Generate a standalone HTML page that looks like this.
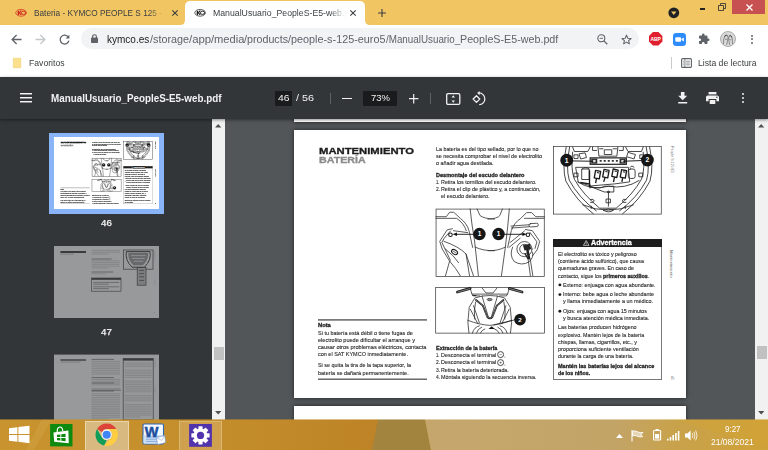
<!DOCTYPE html>
<html><head><meta charset="utf-8"><title>ManualUsuario_PeopleS-E5-web.pdf</title>
<style>
*{box-sizing:border-box;margin:0;padding:0}
html,body{width:768px;height:450px;overflow:hidden;background:#fff;font-family:"Liberation Sans",sans-serif;}
.abs{position:absolute}
.t{position:absolute;white-space:nowrap;transform-origin:0 50%;display:block}
svg{position:absolute;overflow:visible}
#tabstrip{left:0;top:0;width:768px;height:25px;background:#f0c562}
#tab2{left:185px;top:1px;width:180px;height:24px;background:#fff;border-radius:5px 5px 0 0}
#toolbar{left:0;top:25px;width:768px;height:27px;background:#fff}
#omni{left:81px;top:28px;width:558px;height:21px;border-radius:11px;background:#f1f3f4}
#bm{left:0;top:52px;width:768px;height:25px;background:#fff}
#pdfbar{left:0;top:77px;width:768px;height:42px;background:#323639;box-shadow:0 1px 3px rgba(0,0,0,.45)}
#side{left:0;top:119px;width:212px;height:301px;background:#323639}
#sidescroll{left:212px;top:119px;width:13px;height:301px;background:#f1f1f1}
#main{left:225px;top:119px;width:531px;height:301px;background:#525659}
#mainscroll{left:755px;top:119px;width:13px;height:301px;background:#f1f1f1}
#taskbar{left:0;top:419px;width:768px;height:31px;-webkit-mask-image:linear-gradient(rgba(0,0,0,.55) 0,rgba(0,0,0,.55) 1px,#000 1px);mask-image:linear-gradient(rgba(0,0,0,.55) 0,rgba(0,0,0,.55) 1px,#000 1px);background:#c9942f;overflow:hidden}
.page{background:#fff;box-shadow:0 0 4px rgba(0,0,0,.6)}
#pg .t{-webkit-text-stroke:0.1px}
#pg .t[style*="font-weight:700"]{-webkit-text-stroke:0.28px}
.dbox{background:#191b1c}
.th .t{-webkit-text-stroke:0.3px currentColor !important}
.th .hd{-webkit-text-stroke:1.6px currentColor !important}
.th svg g,.th svg rect{stroke-width:9px}

</style></head><body>
<div class="abs" id="tabstrip"></div>
<div class="abs" id="tab2"></div>
<svg style="left:180px;top:20px" width="190" height="5" viewBox="0 0 190 5"><path d="M0,5 Q5,5 5,0 V5 Z M190,5 Q185,5 185,0 V5 Z" fill="#fff"/></svg>
<svg style="left:15px;top:8.7px" width="12.2" height="7.6" viewBox="0 0 24 16"><ellipse cx="12" cy="8" rx="11.2" ry="7.1" fill="none" stroke="#d0241f" stroke-width="1.5"/><path d="M4.8,3.6 H7.6 V7 L10.6,3.4 H13.4 L10,8 L13.4,12.6 H10.6 L7.6,9 V12.4 H4.8 Z" fill="#d0241f"/><ellipse cx="17" cy="8" rx="4.6" ry="3.4" fill="#f0c562" stroke="#d0241f" stroke-width="2"/></svg>
<svg style="left:194.3px;top:8.7px" width="12.2" height="7.6" viewBox="0 0 24 16"><ellipse cx="12" cy="8" rx="11.2" ry="7.1" fill="none" stroke="#222" stroke-width="1.5"/><path d="M4.8,3.6 H7.6 V7 L10.6,3.4 H13.4 L10,8 L13.4,12.6 H10.6 L7.6,9 V12.4 H4.8 Z" fill="#222"/><ellipse cx="17" cy="8" rx="4.6" ry="3.4" fill="#fff" stroke="#222" stroke-width="2"/></svg>
<div class="abs" style="left:33px;top:5px;width:131px;height:15px;overflow:hidden;-webkit-mask-image:linear-gradient(90deg,#000 88%,transparent 100%);mask-image:linear-gradient(90deg,#000 88%,transparent 100%)"><span class="t" style="left:0.50px;top:4.00px;font-size:8.3px;line-height:8.3px;color:#3c4043;transform:scaleX(0.9948);">Bateria - KYMCO PEOPLE S 125 - Kymco</span></div>
<div class="abs" style="left:212px;top:5px;width:134px;height:15px;overflow:hidden;-webkit-mask-image:linear-gradient(90deg,#000 88%,transparent 100%);mask-image:linear-gradient(90deg,#000 88%,transparent 100%)"><span class="t" style="left:0.50px;top:4.00px;font-size:8.3px;line-height:8.3px;color:#3c4043;transform:scaleX(1.0511);">ManualUsuario_PeopleS-E5-web.pdf</span></div>
<svg style="left:171.5px;top:9.5px" width="6" height="6" viewBox="0 0 6 6"><path d="M0.3,0.3 L5.7,5.7 M5.7,0.3 L0.3,5.7" stroke="#3c4043" stroke-width="1.1" fill="none"/></svg>
<svg style="left:350.2px;top:9.5px" width="6" height="6" viewBox="0 0 6 6"><path d="M0.3,0.3 L5.7,5.7 M5.7,0.3 L0.3,5.7" stroke="#3c4043" stroke-width="1.1" fill="none"/></svg>
<svg style="left:377.5px;top:8.5px" width="8" height="8" viewBox="0 0 8 8"><path d="M4,0 V8 M0,4 H8" stroke="#3c4043" stroke-width="1.1" fill="none"/></svg>
<svg style="left:668.3px;top:6.8px" width="11.6" height="11.6" viewBox="0 0 12 12"><circle cx="6" cy="6" r="5.6" fill="#202124"/><path d="M3.2,4.6 H8.8 L6,8.4 Z" fill="#f0c562"/></svg>
<div class="abs" style="left:700px;top:8px;width:5px;height:2px;background:#222"></div>
<svg style="left:717.5px;top:3px" width="8" height="8" viewBox="0 0 8 8"><path d="M0.5,2.5 H5.5 V7.5 H0.5 Z M2.5,2.5 V0.5 H7.5 V5.5 H5.5" stroke="#333" stroke-width="0.85" fill="none"/></svg>
<div class="abs" style="left:732px;top:0;width:33px;height:13.5px;background:#c75050"></div>
<svg style="left:745.5px;top:3.5px" width="7" height="7" viewBox="0 0 7 7"><path d="M0.5,0.5 L6.5,6.5 M6.5,0.5 L0.5,6.5" stroke="#fff" stroke-width="1.3" fill="none"/></svg>
<div class="abs" id="toolbar"></div>
<div class="abs" id="omni"></div>
<svg style="left:11px;top:33.5px" width="11" height="11" viewBox="0 0 11 11"><path d="M10.5,5.5 H1.3 M5.6,1 L1.1,5.5 L5.6,10" stroke="#5f6368" stroke-width="1.3" fill="none"/></svg>
<svg style="left:35px;top:33.5px" width="11" height="11" viewBox="0 0 11 11"><path d="M0.5,5.5 H9.7 M5.4,1 L9.9,5.5 L5.4,10" stroke="#c4c7ca" stroke-width="1.3" fill="none"/></svg>
<svg style="left:59px;top:33.5px" width="11" height="11" viewBox="0 0 11 11"><path d="M9.3,3.2 A4.4,4.4 0 1 0 9.9,6.6" stroke="#5f6368" stroke-width="1.3" fill="none"/><path d="M10.4,0.8 V4.6 H6.6 Z" fill="#5f6368"/></svg>
<svg style="left:91px;top:34px" width="7" height="9" viewBox="0 0 7 9"><rect x="0" y="3.6" width="7" height="5.4" rx="0.8" fill="#5f6368"/><path d="M1.6,4 V2.6 A1.9,1.9 0 0 1 5.4,2.6 V4" stroke="#5f6368" stroke-width="1.1" fill="none"/></svg>
<span class="t" style="left:107.00px;top:34.00px;font-size:10.9px;line-height:10.9px;color:#202124;transform:scaleX(0.9197);">kymco.es</span><span class="t" style="left:149.50px;top:34.00px;font-size:10.9px;line-height:10.9px;color:#5f6368;transform:scaleX(0.9911);">/storage</span><span class="t" style="left:188.50px;top:34.00px;font-size:10.9px;line-height:10.9px;color:#5f6368;transform:scaleX(1.0474);">/app</span><span class="t" style="left:210.70px;top:34.00px;font-size:10.9px;line-height:10.9px;color:#5f6368;transform:scaleX(1.0187);">/media</span><span class="t" style="left:244.00px;top:34.00px;font-size:10.9px;line-height:10.9px;color:#5f6368;transform:scaleX(0.9822);">/products</span><span class="t" style="left:288.00px;top:34.00px;font-size:10.9px;line-height:10.9px;color:#5f6368;transform:scaleX(0.9941);">/people-s-125-euro5</span><span class="t" style="left:385.50px;top:34.00px;font-size:10.9px;line-height:10.9px;color:#5f6368;transform:scaleX(0.9013);">/ManualUsuario_</span><span class="t" style="left:459.70px;top:34.00px;font-size:10.9px;line-height:10.9px;color:#5f6368;transform:scaleX(0.9841);">PeopleS-E5-web.pdf</span>
<svg style="left:596.5px;top:34px" width="11" height="11" viewBox="0 0 11 11"><circle cx="4.3" cy="4.3" r="3.5" stroke="#5f6368" stroke-width="1.1" fill="none"/><path d="M6.9,6.9 L10.3,10.3" stroke="#5f6368" stroke-width="1.3"/><path d="M2.6,4.3 H6" stroke="#5f6368" stroke-width="0.9"/></svg>
<svg style="left:620.5px;top:33.5px" width="11" height="11" viewBox="0 0 24 24"><path d="M12,2.5 L14.9,9.1 L22,9.8 L16.6,14.5 L18.2,21.5 L12,17.8 L5.8,21.5 L7.4,14.5 L2,9.8 L9.1,9.1 Z" stroke="#5f6368" stroke-width="2.3" fill="none" stroke-linejoin="round"/></svg>
<svg style="left:648.8px;top:32.3px" width="13.4" height="13.4" viewBox="0 0 14 14"><path d="M4.1,0 H9.9 L14,4.1 V9.9 L9.9,14 H4.1 L0,9.9 V4.1 Z" fill="#e0202e"/><text x="7" y="8.9" font-family="Liberation Sans, sans-serif" font-size="5.4" font-weight="700" fill="#fff" text-anchor="middle" textLength="11" lengthAdjust="spacingAndGlyphs">ABP</text></svg>
<svg style="left:673px;top:33px" width="13" height="13" viewBox="0 0 13 13"><rect width="13" height="13" rx="3.2" fill="#2f8cff"/><rect x="2.3" y="4.2" width="5.8" height="4.6" rx="1" fill="#fff"/><path d="M8.6,6 L10.8,4.5 V8.5 L8.6,7 Z" fill="#fff"/></svg>
<svg style="left:697.5px;top:33px" width="12" height="12" viewBox="0 0 24 24"><path d="M20.5,11 H19 V7 a2,2 0 0 0 -2,-2 h-4 V3.5 a2.5,2.5 0 0 0 -5,0 V5 H4 a2,2 0 0 0 -2,2 v3.8 h1.5 a2.7,2.7 0 0 1 0,5.4 H2 V20 a2,2 0 0 0 2,2 h3.8 v-1.5 a2.7,2.7 0 0 1 5.4,0 V22 H17 a2,2 0 0 0 2,-2 v-4 h1.5 a2.5,2.5 0 0 0 0,-5 Z" fill="#5f6368"/></svg>
<svg style="left:719.5px;top:31px" width="16" height="16" viewBox="0 0 16 16"><circle cx="8" cy="8" r="7.8" fill="#d9d9d9"/><circle cx="8" cy="8" r="7.5" fill="none" stroke="#8a8a8a" stroke-width="0.6"/><path d="M3.5,13 Q3,7 5.6,4.2 Q7.6,3.6 8,6.5 Q7.8,10 6.6,13.8 M12.5,13 Q13,7.5 10.8,4.6 Q8.8,4 8.6,7 Q8.8,10.5 9.8,13.8 M5,8 Q6,9 7,8 M9.4,8.4 Q10.4,9.3 11.4,8.4" stroke="#666" stroke-width="0.7" fill="none"/><path d="M4.2,6 Q5.5,3 7.4,4.5 M9.2,5 Q11,3.4 12.2,6.4" stroke="#555" stroke-width="0.9" fill="none"/></svg>
<div class="abs" style="left:750.8px;top:34.5px;width:2px;height:2px;border-radius:1px;background:#5f6368"></div><div class="abs" style="left:750.8px;top:38px;width:2px;height:2px;border-radius:1px;background:#5f6368"></div><div class="abs" style="left:750.8px;top:41.5px;width:2px;height:2px;border-radius:1px;background:#5f6368"></div>
<div class="abs" id="bm"></div>
<svg style="left:12.5px;top:58px" width="8" height="10" viewBox="0 0 8 10"><path d="M0.3,0.3 H7.7 V9.7 H0.3 Z" fill="#fbe18d" stroke="#f2cf6a" stroke-width="0.6"/></svg>
<span class="t" style="left:28.80px;top:59.00px;font-size:8.6px;line-height:8.6px;color:#3c4043;transform:scaleX(1.0045);">Favoritos</span>
<div class="abs" style="left:671px;top:57px;width:1px;height:11.5px;background:#c9cccf"></div>
<svg style="left:680.5px;top:58px" width="11" height="10" viewBox="0 0 11 10"><rect x="0.6" y="0.6" width="9.8" height="8.8" rx="1" stroke="#5f6368" stroke-width="1.1" fill="none"/><path d="M3.9,1 V9" stroke="#5f6368" stroke-width="0.8"/><path d="M5.2,3.2 H8.8 M5.2,5 H8.8 M5.2,6.8 H8.8 M1.8,3.2 H2.8 M1.8,5 H2.8 M1.8,6.8 H2.8" stroke="#5f6368" stroke-width="0.7"/></svg>
<span class="t" style="left:698.00px;top:59.00px;font-size:8.6px;line-height:8.6px;color:#3c4043;transform:scaleX(1.0038);">Lista de lectura</span>
<div class="abs" id="side"></div>
<div class="abs" id="sidescroll"></div>
<div class="abs" id="main"></div>
<div class="abs" id="mainscroll"></div>
<svg style="left:215.3px;top:124.2px" width="6.4" height="3.6" viewBox="0 0 7 4"><path d="M0,4 L3.5,0 L7,4 Z" fill="#505050"/></svg><svg style="left:215.3px;top:411px" width="6.4" height="3.6" viewBox="0 0 7 4"><path d="M0,0 L3.5,4 L7,0 Z" fill="#505050"/></svg><svg style="left:758.3px;top:124.2px" width="6.4" height="3.6" viewBox="0 0 7 4"><path d="M0,4 L3.5,0 L7,4 Z" fill="#505050"/></svg><svg style="left:758.3px;top:411px" width="6.4" height="3.6" viewBox="0 0 7 4"><path d="M0,0 L3.5,4 L7,0 Z" fill="#505050"/></svg><div class="abs" style="left:214px;top:347px;width:10px;height:12.5px;background:#c1c1c1"></div><div class="abs" style="left:757px;top:346px;width:10px;height:12.5px;background:#c1c1c1"></div>
<div class="abs page" style="left:294px;top:112px;width:392px;height:10px"></div>
<div class="abs page" id="pg" style="left:294px;top:130px;width:392px;height:268px">
<svg style="left:138px;top:74px" width="118" height="76" viewBox="0 0 699 450">
<rect x="24" y="30" width="641" height="400" fill="#fff" stroke="#333" stroke-width="4.2"/>
<g transform="translate(11.84 11.84) scale(.9737)">
<g fill="none" stroke="#262626" stroke-width="4.6" stroke-linecap="round" stroke-linejoin="round">
<path d="M12,65 H75 L95,38 H120 L160,75 Q200,105 213,150 L235,252"/><path d="M12,75 H138 Q182,104 196,150"/>
<path d="M220,18 Q230,120 246,205 L270,424"/><path d="M250,250 Q300,274 368,272"/><path d="M262,18 L280,58 Q300,76 368,80"/>
<path d="M112,138 L80,145 L35,215 L50,262 L95,335 L70,424"/><path d="M100,152 L62,196 L48,222 L100,330"/>
<path d="M118,150 L205,162"/><path d="M60,215 Q150,245 195,292 L216,424"/><path d="M95,335 Q135,380 160,424"/><path d="M195,292 L240,424"/>
<path d="M70,262 Q120,300 150,345"/>
</g>
<circle cx="100" cy="175" r="11" fill="#fff" stroke="#1c1c1c" stroke-width="6.5"/>
<ellipse cx="125" cy="280" rx="20" ry="13" transform="rotate(32 125 280)" fill="#fff" stroke="#1c1c1c" stroke-width="6.5"/><path d="M112,272 L138,288" stroke="#1c1c1c" stroke-width="4"/>
<path d="M130,172 H250" stroke="#111" stroke-width="5.5"/><path d="M113,172 L140,161 V183 Z" fill="#111"/>
</g>
<g transform="translate(331.5 11.84) scale(.9737)">
<g fill="none" stroke="#262626" stroke-width="4.6" stroke-linecap="round" stroke-linejoin="round">
<path d="M343,65 H290 L265,40 H235 L200,75 Q160,100 142,150 L120,252"/><path d="M343,75 H222"/>
<path d="M130,18 Q122,120 106,250 L82,424"/><path d="M0,272 Q60,274 106,250"/><path d="M0,80 Q60,76 72,58 L88,18"/>
<path d="M140,122 L250,114 M142,134 L252,126"/><rect x="250" y="106" width="56" height="20" rx="9" transform="rotate(-4 278 116)"/>
<path d="M228,143 L270,150 L315,215 L300,265 L272,302"/><path d="M255,160 L298,218 L286,258"/>
<path d="M135,222 L222,152"/><path d="M128,252 L196,196"/>
<path d="M150,250 Q128,300 160,338 Q205,366 250,340 Q282,310 270,280"/>
<circle cx="222" cy="262" r="46"/><circle cx="222" cy="262" r="29"/>
<path d="M244,322 L258,424 M257,322 L273,424"/>
</g>
<circle cx="243" cy="175" r="11" fill="#fff" stroke="#1c1c1c" stroke-width="6.5"/>
<path d="M213,238 L256,230 L263,262 L222,271 Z" fill="#262626"/><path d="M240,268 L250,318" stroke="#222" stroke-width="15" stroke-linecap="round"/><path d="M226,290 L243,320" stroke="#222" stroke-width="8" stroke-linecap="round"/>
<path d="M95,172 H220" stroke="#111" stroke-width="5.5"/><path d="M236,172 L209,161 V183 Z" fill="#111"/>
</g>
<circle cx="281" cy="178" r="37" fill="#161616"/><circle cx="394" cy="178" r="37" fill="#161616"/>
<text x="281" y="191" font-family="Liberation Sans, sans-serif" font-size="38" font-weight="700" fill="#fff" text-anchor="middle">1</text>
<text x="394" y="191" font-family="Liberation Sans, sans-serif" font-size="38" font-weight="700" fill="#fff" text-anchor="middle">1</text>
</svg>
<svg style="left:138px;top:153px" width="118" height="54" viewBox="0 0 768 351">
<rect x="24" y="30" width="708" height="296" fill="#fff" stroke="#333" stroke-width="4.6"/>
<g transform="translate(130.2 13) scale(.7375)">
<g fill="none" stroke="#262626" stroke-width="6.6" stroke-linecap="round" stroke-linejoin="round">
<path d="M160,26 L176,80 H490 L506,26"/><path d="M265,26 L300,70 H362 L397,26"/><path d="M176,80 L186,96 H246 M490,80 L480,96 H420"/>
<path d="M268,97 L202,114 L152,196 L140,330 L150,424"/><path d="M398,97 L464,114 L514,196 L526,330 L516,424"/>
<path d="M268,97 Q333,88 398,97"/>
<path d="M266,102 L322,286"/><path d="M400,102 L346,286"/>
<path d="M190,182 L242,334"/><path d="M162,214 L228,342"/><path d="M476,182 L424,334"/><path d="M504,214 L438,342"/>
<path d="M208,150 Q190,230 200,300"/><path d="M458,150 Q476,230 466,300"/>
<path d="M140,312 Q250,352 333,356 Q420,352 526,312"/>
<path d="M180,424 Q194,370 242,360"/><path d="M216,424 Q226,386 262,372"/><path d="M486,424 Q472,370 424,360"/><path d="M450,424 Q440,386 404,372"/>
<path d="M250,424 Q262,396 290,388 M416,424 Q404,396 376,388"/>
</g>
<g fill="none" stroke="#1e1e1e" stroke-linecap="round" stroke-linejoin="round">
<path d="M48,62 L160,30" stroke-width="24"/><path d="M618,62 L506,30" stroke-width="24"/>
<path d="M212,132 L272,182 L312,282 Q334,304 356,282 L396,182 L454,132" stroke-width="16"/>
</g>
<path d="M50,62 L158,31 M616,62 L508,31" stroke="#9a9a9a" stroke-width="7" stroke-linecap="round"/>
<path d="M212,132 L272,182 L312,282 Q334,304 356,282 L396,182 L454,132" stroke="#bdbdbd" stroke-width="4" fill="none" stroke-linejoin="round"/>
<ellipse cx="332" cy="128" rx="22" ry="10" fill="#8a8a8a" stroke="#222" stroke-width="6"/>
<path d="M322,388 L350,364 L378,388 Z" fill="#111"/>
<path d="M366,352 L560,306" stroke="#111" stroke-width="6.5"/>
<rect x="180" y="88" width="36" height="8" fill="#222"/>
</g>
<circle cx="573" cy="238" r="38" fill="#161616"/>
<text x="573" y="252" font-family="Liberation Sans, sans-serif" font-size="40" font-weight="700" fill="#fff" text-anchor="middle">2</text>
</svg>
<svg style="left:255px;top:12px" width="118" height="76" viewBox="0 0 699 450">
<rect x="27" y="27" width="638" height="400" fill="#fff" stroke="#333" stroke-width="4.2"/>
<g fill="none" stroke="#262626" stroke-width="5" stroke-linecap="round" stroke-linejoin="round">
<path d="M102,30 Q76,150 100,232 Q160,345 262,425"/><path d="M596,30 Q622,150 598,232 Q538,345 436,425"/>
<path d="M122,30 Q98,150 120,226 Q176,330 280,408"/><path d="M576,30 Q600,150 578,226 Q522,330 418,408"/>
<path d="M140,60 Q128,160 150,220 Q200,310 300,392 L398,392 Q498,310 548,220 Q570,160 558,60"/>
<path d="M140,30 L150,56 L230,56 L244,30 M558,30 L548,56 L468,56 L454,30"/>
<path d="M290,30 L296,84 L402,84 L408,30"/><rect x="330" y="46" width="42" height="28"/>
<path d="M258,30 v20 h24 M440,30 v20 h-24 M300,40 h20 M380,40 h20"/>
<path d="M180,70 L214,64 L222,92 L190,100 Z M470,62 L512,74 L504,100 L462,88 Z"/>
<path d="M150,76 h22 v22 h-22 z M540,76 h22 v22 h-22 z"/>
<path d="M160,150 L470,150 L478,236 L390,248 L250,260 L176,240 Z"/>
<rect x="196" y="160" width="42" height="62"/><path d="M196,160 q20,-18 42,0"/><rect x="470" y="160" width="40" height="56" rx="12"/><path d="M480,150 q10,-16 24,0"/>
<path d="M150,184 h22 v22 h-22 z M534,184 h22 v22 h-22 z"/>
<path d="M240,262 Q300,282 330,262 L384,262 L384,296 L330,296 Z"/>
<path d="M352,296 V380 M340,338 h24 v22 h-24 z"/><circle cx="352" cy="296" r="6"/>
<path d="M246,340 q20,-6 22,10 q-4,12 -22,8 M456,340 q-20,-6 -22,10 q4,12 22,8"/>
<path d="M200,372 Q350,436 500,372"/><path d="M322,404 Q352,390 382,404 Q352,424 322,404"/>
<path d="M250,380 v14 M452,380 v14"/>
<path d="M170,236 Q250,290 352,262 Q450,280 534,228"/>
</g>
<g fill="none" stroke="#1c1c1c" stroke-width="8" stroke-linejoin="round">
<path d="M276,168 l30,6 l-8,44 l-30,-6 z M326,162 l30,6 l-8,44 l-30,-6 z M380,160 l30,6 l-8,44 l-30,-6 z M430,164 l30,6 l-8,44 l-30,-6 z"/>
<path d="M282,214 l-6,30 M332,210 l-8,26 M388,208 l-6,30 M436,212 l-4,24"/>
<path d="M186,240 L240,248 L244,274"/><path d="M240,168 V262"/>
<path d="M284,180 l14,3 M334,174 l14,3 M388,172 l14,3 M438,176 l14,3" stroke-width="6"/>
</g>
<rect x="244" y="94" width="214" height="38" fill="#fff" stroke="#1c1c1c" stroke-width="7"/><rect x="250" y="98" width="36" height="30" fill="#2a2a2a"/><rect x="418" y="98" width="36" height="30" fill="#2a2a2a"/><rect x="260" y="106" width="16" height="14" fill="#ddd"/><rect x="428" y="106" width="16" height="14" fill="#ddd"/>
<path d="M300,112 h12 m12,0 h12 m12,0 h12 m12,0 h12 m12,0 h12" stroke="#333" stroke-width="10"/>
<path d="M140,112 L262,114 M438,114 L545,110" stroke="#111" stroke-width="5.5"/>
<circle cx="105" cy="108" r="38" fill="#161616"/><circle cx="583" cy="107" r="38" fill="#161616"/>
<text x="105" y="122" font-family="Liberation Sans, sans-serif" font-size="40" font-weight="700" fill="#fff" text-anchor="middle">1</text>
<text x="583" y="121" font-family="Liberation Sans, sans-serif" font-size="40" font-weight="700" fill="#fff" text-anchor="middle">2</text>
</svg>
<div class="abs" style="left:24px;top:189px;width:109px;height:2px;background:linear-gradient(#7a7a7a 50%,#9a9a9a 50%)"></div><div class="abs" style="left:24px;top:248px;width:109px;height:2px;background:linear-gradient(#b0b0b0 50%,#6c6c6c 50%)"></div>
<div class="abs" style="left:258.8px;top:108.8px;width:109px;height:140.8px;border:0.8px solid #777"></div><div class="abs" style="left:258.8px;top:108.8px;width:109px;height:8px;background:#1d1d1d"></div><svg style="left:288.6px;top:110px" width="6.4" height="5.8" viewBox="0 0 6.4 5.8"><path d="M3.2,0.5 L6,5.4 H0.4 Z" stroke="#fff" stroke-width="0.6" fill="none"/><path d="M3.2,2.2 V3.8 M3.2,4.3 V4.8" stroke="#fff" stroke-width="0.6"/></svg>
<svg style="left:0;top:0" width="392" height="268" viewBox="0 0 392 268"><circle cx="265.9" cy="154.9" r="1.45" fill="#1c1c1c"/><circle cx="265.9" cy="164.6" r="1.45" fill="#1c1c1c"/><circle cx="265.9" cy="181.2" r="1.45" fill="#1c1c1c"/></svg>
<svg style="left:203.4px;top:221.2px" width="9" height="7.2" viewBox="-3.6 -3.6 9 7.2"><circle r="3" fill="none" stroke="#222" stroke-width="0.8"/><path d="M-1.1,0 H1.1" stroke="#333" stroke-width="0.5"/><circle cx="4.3" cy="2.4" r="0.45" fill="#222"/></svg><svg style="left:203.4px;top:229.0px" width="9" height="7.2" viewBox="-3.6 -3.6 9 7.2"><circle r="3" fill="none" stroke="#222" stroke-width="0.8"/><path d="M-1.1,0 H1.1 M0,-1.1 V1.1" stroke="#333" stroke-width="0.5"/><circle cx="4.3" cy="2.4" r="0.45" fill="#222"/></svg>
<span class="t hd" style="left:24.60px;top:17.00px;font-size:9.0px;line-height:9.0px;color:#1c1c1c;font-weight:700;transform:scaleX(1.2528);-webkit-text-stroke:0.3px #1c1c1c;">MANTENIMIENTO</span><span class="t hd" style="left:24.60px;top:26.00px;font-size:8.4px;line-height:8.4px;color:#8c8c8c;font-weight:700;transform:scaleX(1.2760);-webkit-text-stroke:0.3px #8c8c8c;">BATERÍA</span><span class="t" style="left:141.50px;top:17.00px;font-size:5.3px;line-height:5.3px;color:#262626;transform:scaleX(1.0089);">La batería es del tipo sellado, por lo que no</span><span class="t" style="left:141.50px;top:24.00px;font-size:5.3px;line-height:5.3px;color:#262626;transform:scaleX(1.0286);">se necesita comprobar el nivel de electrolito</span><span class="t" style="left:141.50px;top:31.00px;font-size:5.3px;line-height:5.3px;color:#262626;transform:scaleX(1.0169);">o añadir agua destilada.</span><span class="t" style="left:141.50px;top:43.00px;font-size:5.3px;line-height:5.3px;color:#262626;font-weight:700;transform:scaleX(1.0476);">Desmontaje del escudo delantero</span><span class="t" style="left:141.50px;top:50.00px;font-size:5.3px;line-height:5.3px;color:#262626;transform:scaleX(0.7923);">1.</span><span class="t" style="left:147.20px;top:50.00px;font-size:5.3px;line-height:5.3px;color:#262626;transform:scaleX(1.0136);">Retira los tornillos del escudo delantero.</span><span class="t" style="left:141.50px;top:57.00px;font-size:5.3px;line-height:5.3px;color:#262626;transform:scaleX(0.9281);">2.</span><span class="t" style="left:147.20px;top:57.00px;font-size:5.3px;line-height:5.3px;color:#262626;transform:scaleX(1.0118);">Retira el clip de plástico y, a continuación,</span><span class="t" style="left:147.20px;top:64.00px;font-size:5.3px;line-height:5.3px;color:#262626;transform:scaleX(1.0167);">el escudo delantero.</span><span class="t" style="left:141.50px;top:216.00px;font-size:5.3px;line-height:5.3px;color:#262626;font-weight:700;transform:scaleX(1.0291);">Extracción de la batería</span><span class="t" style="left:141.50px;top:223.00px;font-size:5.3px;line-height:5.3px;color:#262626;transform:scaleX(0.7923);">1.</span><span class="t" style="left:147.20px;top:223.00px;font-size:5.3px;line-height:5.3px;color:#262626;transform:scaleX(1.0264);">Desconecta el terminal</span><span class="t" style="left:141.50px;top:230.00px;font-size:5.3px;line-height:5.3px;color:#262626;transform:scaleX(0.9281);">2.</span><span class="t" style="left:147.20px;top:230.00px;font-size:5.3px;line-height:5.3px;color:#262626;transform:scaleX(1.0264);">Desconecta el terminal</span><span class="t" style="left:141.50px;top:238.00px;font-size:5.3px;line-height:5.3px;color:#262626;transform:scaleX(0.9281);">3.</span><span class="t" style="left:147.20px;top:238.00px;font-size:5.3px;line-height:5.3px;color:#262626;transform:scaleX(1.0055);">Retira la batería deteriorada.</span><span class="t" style="left:141.50px;top:245.00px;font-size:5.3px;line-height:5.3px;color:#262626;transform:scaleX(0.9281);">4.</span><span class="t" style="left:147.20px;top:245.00px;font-size:5.3px;line-height:5.3px;color:#262626;transform:scaleX(1.0167);">Móntala siguiendo la secuencia inversa.</span><span class="t" style="left:24.00px;top:193.00px;font-size:5.3px;line-height:5.3px;color:#262626;font-weight:700;transform:scaleX(1.0875);">Nota</span><span class="t" style="left:24.00px;top:201.00px;font-size:5.3px;line-height:5.3px;color:#262626;transform:scaleX(1.0318);">Si tu batería está débil o tiene fugas de</span><span class="t" style="left:24.00px;top:208.00px;font-size:5.3px;line-height:5.3px;color:#262626;transform:scaleX(1.0481);">electrolito puede dificultar el arranque y</span><span class="t" style="left:24.00px;top:215.00px;font-size:5.3px;line-height:5.3px;color:#262626;transform:scaleX(1.0611);">causar otros problemas eléctricos, contacta</span><span class="t" style="left:24.00px;top:222.00px;font-size:5.3px;line-height:5.3px;color:#262626;transform:scaleX(1.0340);">con el SAT KYMCO inmediatamente.</span><span class="t" style="left:24.00px;top:233.00px;font-size:5.3px;line-height:5.3px;color:#262626;transform:scaleX(1.0189);">Si se quita la tira de la tapa superior, la</span><span class="t" style="left:24.00px;top:241.00px;font-size:5.3px;line-height:5.3px;color:#262626;transform:scaleX(1.0371);">batería se dañará permanentemente.</span><span class="t" style="left:296.50px;top:110.00px;font-size:6.9px;line-height:6.9px;color:#fff;font-weight:700;transform:scaleX(1.0318);">Advertencia</span><span class="t" style="left:264.00px;top:122.00px;font-size:5.3px;line-height:5.3px;color:#262626;transform:scaleX(1.0037);">El electrolito es tóxico y peligroso</span><span class="t" style="left:264.00px;top:129.00px;font-size:5.3px;line-height:5.3px;color:#262626;transform:scaleX(0.9957);">(contiene ácido sulfúrico), que causa</span><span class="t" style="left:264.00px;top:136.00px;font-size:5.3px;line-height:5.3px;color:#262626;transform:scaleX(0.9953);">quemaduras graves. En caso de</span><span class="t" style="left:264.00px;top:144.00px;font-size:5.3px;line-height:5.3px;color:#262626;transform:scaleX(0.9938);">contacto, sigue los</span><span class="t" style="left:309.30px;top:144.00px;font-size:5.3px;line-height:5.3px;color:#262626;font-weight:700;transform:scaleX(1.0191);">primeros auxilios</span><span class="t" style="left:354.00px;top:144.00px;font-size:5.3px;line-height:5.3px;color:#262626;transform:scaleX(0.9513);">.</span><span class="t" style="left:268.80px;top:153.00px;font-size:5.3px;line-height:5.3px;color:#262626;transform:scaleX(1.0143);">Externo: enjuaga con agua abundante.</span><span class="t" style="left:268.80px;top:162.00px;font-size:5.3px;line-height:5.3px;color:#262626;transform:scaleX(1.0175);">Interno: bebe agua o leche abundante</span><span class="t" style="left:268.80px;top:169.00px;font-size:5.3px;line-height:5.3px;color:#262626;transform:scaleX(1.0258);">y llama inmediatamente a un médico.</span><span class="t" style="left:268.80px;top:179.00px;font-size:5.3px;line-height:5.3px;color:#262626;transform:scaleX(1.0080);">Ojos: enjuaga con agua 15 minutos</span><span class="t" style="left:268.80px;top:186.00px;font-size:5.3px;line-height:5.3px;color:#262626;transform:scaleX(1.0236);">y busca atención médica inmediata.</span><span class="t" style="left:264.00px;top:195.00px;font-size:5.3px;line-height:5.3px;color:#262626;transform:scaleX(1.0110);">Las baterías producen hidrógeno</span><span class="t" style="left:264.00px;top:203.00px;font-size:5.3px;line-height:5.3px;color:#262626;transform:scaleX(1.0037);">explosivo. Mantén lejos de la batería</span><span class="t" style="left:264.00px;top:210.00px;font-size:5.3px;line-height:5.3px;color:#262626;transform:scaleX(1.0026);">chispas, llamas, cigarrillos, etc., y</span><span class="t" style="left:264.00px;top:217.00px;font-size:5.3px;line-height:5.3px;color:#262626;transform:scaleX(1.0316);">proporciona suficiente ventilación</span><span class="t" style="left:264.00px;top:224.00px;font-size:5.3px;line-height:5.3px;color:#262626;transform:scaleX(1.0002);">durante la carga de una batería.</span><span class="t" style="left:264.00px;top:234.00px;font-size:5.3px;line-height:5.3px;color:#262626;font-weight:700;transform:scaleX(1.0384);">Mantén las baterías lejos del alcance</span><span class="t" style="left:264.00px;top:241.00px;font-size:5.3px;line-height:5.3px;color:#262626;font-weight:700;transform:scaleX(0.9915);">de los niños.</span>
<span class="t" style="left:379.2px;top:16px;font-size:3.6px;line-height:3.6px;color:#666;-webkit-text-stroke:0;transform-origin:0 0;transform:rotate(90deg)">People S 125 E5</span><span class="t" style="left:379.2px;top:120.4px;font-size:4.2px;line-height:4.2px;color:#666;-webkit-text-stroke:0;transform-origin:0 0;transform:rotate(90deg)">Mantenimiento</span><span class="t" style="left:379.4px;top:245.6px;font-size:3.6px;line-height:3.6px;color:#666;-webkit-text-stroke:0;transform-origin:0 0;transform:rotate(90deg)">45</span>
</div>
<div class="abs page" style="left:294px;top:406px;width:392px;height:16px"></div>
<div class="abs" style="left:49.4px;top:132.9px;width:114.3px;height:80.9px;background:#8ab4f8"></div>
<div class="abs" style="left:54px;top:137px;width:105px;height:72px;background:#fff;overflow:hidden"><div class="abs th" style="left:0;top:0;width:392px;height:268px;transform-origin:0 0;transform:scale(0.268)">
<svg style="left:138px;top:74px" width="118" height="76" viewBox="0 0 699 450">
<rect x="24" y="30" width="641" height="400" fill="#fff" stroke="#333" stroke-width="4.2"/>
<g transform="translate(11.84 11.84) scale(.9737)">
<g fill="none" stroke="#262626" stroke-width="4.6" stroke-linecap="round" stroke-linejoin="round">
<path d="M12,65 H75 L95,38 H120 L160,75 Q200,105 213,150 L235,252"/><path d="M12,75 H138 Q182,104 196,150"/>
<path d="M220,18 Q230,120 246,205 L270,424"/><path d="M250,250 Q300,274 368,272"/><path d="M262,18 L280,58 Q300,76 368,80"/>
<path d="M112,138 L80,145 L35,215 L50,262 L95,335 L70,424"/><path d="M100,152 L62,196 L48,222 L100,330"/>
<path d="M118,150 L205,162"/><path d="M60,215 Q150,245 195,292 L216,424"/><path d="M95,335 Q135,380 160,424"/><path d="M195,292 L240,424"/>
<path d="M70,262 Q120,300 150,345"/>
</g>
<circle cx="100" cy="175" r="11" fill="#fff" stroke="#1c1c1c" stroke-width="6.5"/>
<ellipse cx="125" cy="280" rx="20" ry="13" transform="rotate(32 125 280)" fill="#fff" stroke="#1c1c1c" stroke-width="6.5"/><path d="M112,272 L138,288" stroke="#1c1c1c" stroke-width="4"/>
<path d="M130,172 H250" stroke="#111" stroke-width="5.5"/><path d="M113,172 L140,161 V183 Z" fill="#111"/>
</g>
<g transform="translate(331.5 11.84) scale(.9737)">
<g fill="none" stroke="#262626" stroke-width="4.6" stroke-linecap="round" stroke-linejoin="round">
<path d="M343,65 H290 L265,40 H235 L200,75 Q160,100 142,150 L120,252"/><path d="M343,75 H222"/>
<path d="M130,18 Q122,120 106,250 L82,424"/><path d="M0,272 Q60,274 106,250"/><path d="M0,80 Q60,76 72,58 L88,18"/>
<path d="M140,122 L250,114 M142,134 L252,126"/><rect x="250" y="106" width="56" height="20" rx="9" transform="rotate(-4 278 116)"/>
<path d="M228,143 L270,150 L315,215 L300,265 L272,302"/><path d="M255,160 L298,218 L286,258"/>
<path d="M135,222 L222,152"/><path d="M128,252 L196,196"/>
<path d="M150,250 Q128,300 160,338 Q205,366 250,340 Q282,310 270,280"/>
<circle cx="222" cy="262" r="46"/><circle cx="222" cy="262" r="29"/>
<path d="M244,322 L258,424 M257,322 L273,424"/>
</g>
<circle cx="243" cy="175" r="11" fill="#fff" stroke="#1c1c1c" stroke-width="6.5"/>
<path d="M213,238 L256,230 L263,262 L222,271 Z" fill="#262626"/><path d="M240,268 L250,318" stroke="#222" stroke-width="15" stroke-linecap="round"/><path d="M226,290 L243,320" stroke="#222" stroke-width="8" stroke-linecap="round"/>
<path d="M95,172 H220" stroke="#111" stroke-width="5.5"/><path d="M236,172 L209,161 V183 Z" fill="#111"/>
</g>
<circle cx="281" cy="178" r="37" fill="#161616"/><circle cx="394" cy="178" r="37" fill="#161616"/>
<text x="281" y="191" font-family="Liberation Sans, sans-serif" font-size="38" font-weight="700" fill="#fff" text-anchor="middle">1</text>
<text x="394" y="191" font-family="Liberation Sans, sans-serif" font-size="38" font-weight="700" fill="#fff" text-anchor="middle">1</text>
</svg>
<svg style="left:138px;top:153px" width="118" height="54" viewBox="0 0 768 351">
<rect x="24" y="30" width="708" height="296" fill="#fff" stroke="#333" stroke-width="4.6"/>
<g transform="translate(130.2 13) scale(.7375)">
<g fill="none" stroke="#262626" stroke-width="6.6" stroke-linecap="round" stroke-linejoin="round">
<path d="M160,26 L176,80 H490 L506,26"/><path d="M265,26 L300,70 H362 L397,26"/><path d="M176,80 L186,96 H246 M490,80 L480,96 H420"/>
<path d="M268,97 L202,114 L152,196 L140,330 L150,424"/><path d="M398,97 L464,114 L514,196 L526,330 L516,424"/>
<path d="M268,97 Q333,88 398,97"/>
<path d="M266,102 L322,286"/><path d="M400,102 L346,286"/>
<path d="M190,182 L242,334"/><path d="M162,214 L228,342"/><path d="M476,182 L424,334"/><path d="M504,214 L438,342"/>
<path d="M208,150 Q190,230 200,300"/><path d="M458,150 Q476,230 466,300"/>
<path d="M140,312 Q250,352 333,356 Q420,352 526,312"/>
<path d="M180,424 Q194,370 242,360"/><path d="M216,424 Q226,386 262,372"/><path d="M486,424 Q472,370 424,360"/><path d="M450,424 Q440,386 404,372"/>
<path d="M250,424 Q262,396 290,388 M416,424 Q404,396 376,388"/>
</g>
<g fill="none" stroke="#1e1e1e" stroke-linecap="round" stroke-linejoin="round">
<path d="M48,62 L160,30" stroke-width="24"/><path d="M618,62 L506,30" stroke-width="24"/>
<path d="M212,132 L272,182 L312,282 Q334,304 356,282 L396,182 L454,132" stroke-width="16"/>
</g>
<path d="M50,62 L158,31 M616,62 L508,31" stroke="#9a9a9a" stroke-width="7" stroke-linecap="round"/>
<path d="M212,132 L272,182 L312,282 Q334,304 356,282 L396,182 L454,132" stroke="#bdbdbd" stroke-width="4" fill="none" stroke-linejoin="round"/>
<ellipse cx="332" cy="128" rx="22" ry="10" fill="#8a8a8a" stroke="#222" stroke-width="6"/>
<path d="M322,388 L350,364 L378,388 Z" fill="#111"/>
<path d="M366,352 L560,306" stroke="#111" stroke-width="6.5"/>
<rect x="180" y="88" width="36" height="8" fill="#222"/>
</g>
<circle cx="573" cy="238" r="38" fill="#161616"/>
<text x="573" y="252" font-family="Liberation Sans, sans-serif" font-size="40" font-weight="700" fill="#fff" text-anchor="middle">2</text>
</svg>
<svg style="left:255px;top:12px" width="118" height="76" viewBox="0 0 699 450">
<rect x="27" y="27" width="638" height="400" fill="#fff" stroke="#333" stroke-width="4.2"/>
<g fill="none" stroke="#262626" stroke-width="5" stroke-linecap="round" stroke-linejoin="round">
<path d="M102,30 Q76,150 100,232 Q160,345 262,425"/><path d="M596,30 Q622,150 598,232 Q538,345 436,425"/>
<path d="M122,30 Q98,150 120,226 Q176,330 280,408"/><path d="M576,30 Q600,150 578,226 Q522,330 418,408"/>
<path d="M140,60 Q128,160 150,220 Q200,310 300,392 L398,392 Q498,310 548,220 Q570,160 558,60"/>
<path d="M140,30 L150,56 L230,56 L244,30 M558,30 L548,56 L468,56 L454,30"/>
<path d="M290,30 L296,84 L402,84 L408,30"/><rect x="330" y="46" width="42" height="28"/>
<path d="M258,30 v20 h24 M440,30 v20 h-24 M300,40 h20 M380,40 h20"/>
<path d="M180,70 L214,64 L222,92 L190,100 Z M470,62 L512,74 L504,100 L462,88 Z"/>
<path d="M150,76 h22 v22 h-22 z M540,76 h22 v22 h-22 z"/>
<path d="M160,150 L470,150 L478,236 L390,248 L250,260 L176,240 Z"/>
<rect x="196" y="160" width="42" height="62"/><path d="M196,160 q20,-18 42,0"/><rect x="470" y="160" width="40" height="56" rx="12"/><path d="M480,150 q10,-16 24,0"/>
<path d="M150,184 h22 v22 h-22 z M534,184 h22 v22 h-22 z"/>
<path d="M240,262 Q300,282 330,262 L384,262 L384,296 L330,296 Z"/>
<path d="M352,296 V380 M340,338 h24 v22 h-24 z"/><circle cx="352" cy="296" r="6"/>
<path d="M246,340 q20,-6 22,10 q-4,12 -22,8 M456,340 q-20,-6 -22,10 q4,12 22,8"/>
<path d="M200,372 Q350,436 500,372"/><path d="M322,404 Q352,390 382,404 Q352,424 322,404"/>
<path d="M250,380 v14 M452,380 v14"/>
<path d="M170,236 Q250,290 352,262 Q450,280 534,228"/>
</g>
<g fill="none" stroke="#1c1c1c" stroke-width="8" stroke-linejoin="round">
<path d="M276,168 l30,6 l-8,44 l-30,-6 z M326,162 l30,6 l-8,44 l-30,-6 z M380,160 l30,6 l-8,44 l-30,-6 z M430,164 l30,6 l-8,44 l-30,-6 z"/>
<path d="M282,214 l-6,30 M332,210 l-8,26 M388,208 l-6,30 M436,212 l-4,24"/>
<path d="M186,240 L240,248 L244,274"/><path d="M240,168 V262"/>
<path d="M284,180 l14,3 M334,174 l14,3 M388,172 l14,3 M438,176 l14,3" stroke-width="6"/>
</g>
<rect x="244" y="94" width="214" height="38" fill="#fff" stroke="#1c1c1c" stroke-width="7"/><rect x="250" y="98" width="36" height="30" fill="#2a2a2a"/><rect x="418" y="98" width="36" height="30" fill="#2a2a2a"/><rect x="260" y="106" width="16" height="14" fill="#ddd"/><rect x="428" y="106" width="16" height="14" fill="#ddd"/>
<path d="M300,112 h12 m12,0 h12 m12,0 h12 m12,0 h12 m12,0 h12" stroke="#333" stroke-width="10"/>
<path d="M140,112 L262,114 M438,114 L545,110" stroke="#111" stroke-width="5.5"/>
<circle cx="105" cy="108" r="38" fill="#161616"/><circle cx="583" cy="107" r="38" fill="#161616"/>
<text x="105" y="122" font-family="Liberation Sans, sans-serif" font-size="40" font-weight="700" fill="#fff" text-anchor="middle">1</text>
<text x="583" y="121" font-family="Liberation Sans, sans-serif" font-size="40" font-weight="700" fill="#fff" text-anchor="middle">2</text>
</svg>
<div class="abs" style="left:24px;top:189px;width:109px;height:2px;background:linear-gradient(#7a7a7a 50%,#9a9a9a 50%)"></div><div class="abs" style="left:24px;top:248px;width:109px;height:2px;background:linear-gradient(#b0b0b0 50%,#6c6c6c 50%)"></div>
<div class="abs" style="left:258.8px;top:108.8px;width:109px;height:140.8px;border:0.8px solid #777"></div><div class="abs" style="left:258.8px;top:108.8px;width:109px;height:8px;background:#1d1d1d"></div><svg style="left:288.6px;top:110px" width="6.4" height="5.8" viewBox="0 0 6.4 5.8"><path d="M3.2,0.5 L6,5.4 H0.4 Z" stroke="#fff" stroke-width="0.6" fill="none"/><path d="M3.2,2.2 V3.8 M3.2,4.3 V4.8" stroke="#fff" stroke-width="0.6"/></svg>
<svg style="left:0;top:0" width="392" height="268" viewBox="0 0 392 268"><circle cx="265.9" cy="154.9" r="1.45" fill="#1c1c1c"/><circle cx="265.9" cy="164.6" r="1.45" fill="#1c1c1c"/><circle cx="265.9" cy="181.2" r="1.45" fill="#1c1c1c"/></svg>
<svg style="left:203.4px;top:221.2px" width="9" height="7.2" viewBox="-3.6 -3.6 9 7.2"><circle r="3" fill="none" stroke="#222" stroke-width="0.8"/><path d="M-1.1,0 H1.1" stroke="#333" stroke-width="0.5"/><circle cx="4.3" cy="2.4" r="0.45" fill="#222"/></svg><svg style="left:203.4px;top:229.0px" width="9" height="7.2" viewBox="-3.6 -3.6 9 7.2"><circle r="3" fill="none" stroke="#222" stroke-width="0.8"/><path d="M-1.1,0 H1.1 M0,-1.1 V1.1" stroke="#333" stroke-width="0.5"/><circle cx="4.3" cy="2.4" r="0.45" fill="#222"/></svg>
<span class="t hd" style="left:24.60px;top:17.00px;font-size:9.0px;line-height:9.0px;color:#1c1c1c;font-weight:700;transform:scaleX(1.2528);-webkit-text-stroke:0.3px #1c1c1c;">MANTENIMIENTO</span><span class="t hd" style="left:24.60px;top:26.00px;font-size:8.4px;line-height:8.4px;color:#8c8c8c;font-weight:700;transform:scaleX(1.2760);-webkit-text-stroke:0.3px #8c8c8c;">BATERÍA</span><span class="t" style="left:141.50px;top:17.00px;font-size:5.3px;line-height:5.3px;color:#262626;transform:scaleX(1.0089);">La batería es del tipo sellado, por lo que no</span><span class="t" style="left:141.50px;top:24.00px;font-size:5.3px;line-height:5.3px;color:#262626;transform:scaleX(1.0286);">se necesita comprobar el nivel de electrolito</span><span class="t" style="left:141.50px;top:31.00px;font-size:5.3px;line-height:5.3px;color:#262626;transform:scaleX(1.0169);">o añadir agua destilada.</span><span class="t" style="left:141.50px;top:43.00px;font-size:5.3px;line-height:5.3px;color:#262626;font-weight:700;transform:scaleX(1.0476);">Desmontaje del escudo delantero</span><span class="t" style="left:141.50px;top:50.00px;font-size:5.3px;line-height:5.3px;color:#262626;transform:scaleX(0.7923);">1.</span><span class="t" style="left:147.20px;top:50.00px;font-size:5.3px;line-height:5.3px;color:#262626;transform:scaleX(1.0136);">Retira los tornillos del escudo delantero.</span><span class="t" style="left:141.50px;top:57.00px;font-size:5.3px;line-height:5.3px;color:#262626;transform:scaleX(0.9281);">2.</span><span class="t" style="left:147.20px;top:57.00px;font-size:5.3px;line-height:5.3px;color:#262626;transform:scaleX(1.0118);">Retira el clip de plástico y, a continuación,</span><span class="t" style="left:147.20px;top:64.00px;font-size:5.3px;line-height:5.3px;color:#262626;transform:scaleX(1.0167);">el escudo delantero.</span><span class="t" style="left:141.50px;top:216.00px;font-size:5.3px;line-height:5.3px;color:#262626;font-weight:700;transform:scaleX(1.0291);">Extracción de la batería</span><span class="t" style="left:141.50px;top:223.00px;font-size:5.3px;line-height:5.3px;color:#262626;transform:scaleX(0.7923);">1.</span><span class="t" style="left:147.20px;top:223.00px;font-size:5.3px;line-height:5.3px;color:#262626;transform:scaleX(1.0264);">Desconecta el terminal</span><span class="t" style="left:141.50px;top:230.00px;font-size:5.3px;line-height:5.3px;color:#262626;transform:scaleX(0.9281);">2.</span><span class="t" style="left:147.20px;top:230.00px;font-size:5.3px;line-height:5.3px;color:#262626;transform:scaleX(1.0264);">Desconecta el terminal</span><span class="t" style="left:141.50px;top:238.00px;font-size:5.3px;line-height:5.3px;color:#262626;transform:scaleX(0.9281);">3.</span><span class="t" style="left:147.20px;top:238.00px;font-size:5.3px;line-height:5.3px;color:#262626;transform:scaleX(1.0055);">Retira la batería deteriorada.</span><span class="t" style="left:141.50px;top:245.00px;font-size:5.3px;line-height:5.3px;color:#262626;transform:scaleX(0.9281);">4.</span><span class="t" style="left:147.20px;top:245.00px;font-size:5.3px;line-height:5.3px;color:#262626;transform:scaleX(1.0167);">Móntala siguiendo la secuencia inversa.</span><span class="t" style="left:24.00px;top:193.00px;font-size:5.3px;line-height:5.3px;color:#262626;font-weight:700;transform:scaleX(1.0875);">Nota</span><span class="t" style="left:24.00px;top:201.00px;font-size:5.3px;line-height:5.3px;color:#262626;transform:scaleX(1.0318);">Si tu batería está débil o tiene fugas de</span><span class="t" style="left:24.00px;top:208.00px;font-size:5.3px;line-height:5.3px;color:#262626;transform:scaleX(1.0481);">electrolito puede dificultar el arranque y</span><span class="t" style="left:24.00px;top:215.00px;font-size:5.3px;line-height:5.3px;color:#262626;transform:scaleX(1.0611);">causar otros problemas eléctricos, contacta</span><span class="t" style="left:24.00px;top:222.00px;font-size:5.3px;line-height:5.3px;color:#262626;transform:scaleX(1.0340);">con el SAT KYMCO inmediatamente.</span><span class="t" style="left:24.00px;top:233.00px;font-size:5.3px;line-height:5.3px;color:#262626;transform:scaleX(1.0189);">Si se quita la tira de la tapa superior, la</span><span class="t" style="left:24.00px;top:241.00px;font-size:5.3px;line-height:5.3px;color:#262626;transform:scaleX(1.0371);">batería se dañará permanentemente.</span><span class="t" style="left:296.50px;top:110.00px;font-size:6.9px;line-height:6.9px;color:#fff;font-weight:700;transform:scaleX(1.0318);">Advertencia</span><span class="t" style="left:264.00px;top:122.00px;font-size:5.3px;line-height:5.3px;color:#262626;transform:scaleX(1.0037);">El electrolito es tóxico y peligroso</span><span class="t" style="left:264.00px;top:129.00px;font-size:5.3px;line-height:5.3px;color:#262626;transform:scaleX(0.9957);">(contiene ácido sulfúrico), que causa</span><span class="t" style="left:264.00px;top:136.00px;font-size:5.3px;line-height:5.3px;color:#262626;transform:scaleX(0.9953);">quemaduras graves. En caso de</span><span class="t" style="left:264.00px;top:144.00px;font-size:5.3px;line-height:5.3px;color:#262626;transform:scaleX(0.9938);">contacto, sigue los</span><span class="t" style="left:309.30px;top:144.00px;font-size:5.3px;line-height:5.3px;color:#262626;font-weight:700;transform:scaleX(1.0191);">primeros auxilios</span><span class="t" style="left:354.00px;top:144.00px;font-size:5.3px;line-height:5.3px;color:#262626;transform:scaleX(0.9513);">.</span><span class="t" style="left:268.80px;top:153.00px;font-size:5.3px;line-height:5.3px;color:#262626;transform:scaleX(1.0143);">Externo: enjuaga con agua abundante.</span><span class="t" style="left:268.80px;top:162.00px;font-size:5.3px;line-height:5.3px;color:#262626;transform:scaleX(1.0175);">Interno: bebe agua o leche abundante</span><span class="t" style="left:268.80px;top:169.00px;font-size:5.3px;line-height:5.3px;color:#262626;transform:scaleX(1.0258);">y llama inmediatamente a un médico.</span><span class="t" style="left:268.80px;top:179.00px;font-size:5.3px;line-height:5.3px;color:#262626;transform:scaleX(1.0080);">Ojos: enjuaga con agua 15 minutos</span><span class="t" style="left:268.80px;top:186.00px;font-size:5.3px;line-height:5.3px;color:#262626;transform:scaleX(1.0236);">y busca atención médica inmediata.</span><span class="t" style="left:264.00px;top:195.00px;font-size:5.3px;line-height:5.3px;color:#262626;transform:scaleX(1.0110);">Las baterías producen hidrógeno</span><span class="t" style="left:264.00px;top:203.00px;font-size:5.3px;line-height:5.3px;color:#262626;transform:scaleX(1.0037);">explosivo. Mantén lejos de la batería</span><span class="t" style="left:264.00px;top:210.00px;font-size:5.3px;line-height:5.3px;color:#262626;transform:scaleX(1.0026);">chispas, llamas, cigarrillos, etc., y</span><span class="t" style="left:264.00px;top:217.00px;font-size:5.3px;line-height:5.3px;color:#262626;transform:scaleX(1.0316);">proporciona suficiente ventilación</span><span class="t" style="left:264.00px;top:224.00px;font-size:5.3px;line-height:5.3px;color:#262626;transform:scaleX(1.0002);">durante la carga de una batería.</span><span class="t" style="left:264.00px;top:234.00px;font-size:5.3px;line-height:5.3px;color:#262626;font-weight:700;transform:scaleX(1.0384);">Mantén las baterías lejos del alcance</span><span class="t" style="left:264.00px;top:241.00px;font-size:5.3px;line-height:5.3px;color:#262626;font-weight:700;transform:scaleX(0.9915);">de los niños.</span>
<span class="t" style="left:379.2px;top:16px;font-size:3.6px;line-height:3.6px;color:#666;-webkit-text-stroke:0;transform-origin:0 0;transform:rotate(90deg)">People S 125 E5</span><span class="t" style="left:379.2px;top:120.4px;font-size:4.2px;line-height:4.2px;color:#666;-webkit-text-stroke:0;transform-origin:0 0;transform:rotate(90deg)">Mantenimiento</span><span class="t" style="left:379.4px;top:245.6px;font-size:3.6px;line-height:3.6px;color:#666;-webkit-text-stroke:0;transform-origin:0 0;transform:rotate(90deg)">45</span>
</div></div>
<svg style="left:48px;top:240px" width="120" height="90" viewBox="0 0 600 450"><rect x="30" y="30" width="525" height="360" fill="#98999a"/><rect x="62" y="55" width="128" height="10" fill="#3a3b3c"/><rect x="62" y="68" width="68" height="5" fill="#7b7c7d"/><path d="M218,52 H360 M218,61 H360 M218,70 H303" stroke="#7b7c7d" stroke-width="3.2" fill="none"/><path d="M218,95 H318" stroke="#57585a" stroke-width="4" fill="none"/><path d="M218,104 H358 M218,113 H358 M218,122 H358 M218,131 H358 M218,140 H302" stroke="#7b7c7d" stroke-width="3.2" fill="none"/><path d="M218,160 H326" stroke="#57585a" stroke-width="4" fill="none"/><path d="M218,169 H290" stroke="#7b7c7d" stroke-width="3.2" fill="none"/><rect x="218" y="190" width="147" height="66" fill="none" stroke="#3a3b3c" stroke-width="3"/><rect x="218" y="190" width="147" height="9" fill="#3a3b3c"/><path d="M226,212 H356 M226,221 H304" stroke="#57585a" stroke-width="3.4" fill="none"/><path d="M226,234 H356 M226,243 H304" stroke="#57585a" stroke-width="3.4" fill="none"/><rect x="377" y="50" width="148" height="96" fill="none" stroke="#3a3b3c" stroke-width="3.5"/><path d="M392,58 Q384,100 420,136 L482,136 Q518,100 510,58 Z" fill="none" stroke="#3a3b3c" stroke-width="5"/><path d="M402,64 Q398,98 428,126 L474,126 Q504,98 500,64 Z" fill="#57585a" opacity=".75"/><path d="M415,78 H488 M420,92 H484 M428,106 H476" stroke="#98999a" stroke-width="4"/><rect x="446" y="138" width="44" height="88" fill="#7d7e80" stroke="#3a3b3c" stroke-width="3.5"/><path d="M456,152 H480 M456,168 H480 M456,184 H480 M456,202 H480" stroke="#3a3b3c" stroke-width="3.5"/><path d="M534,52 V96 M534,196 V226" stroke="#7b7c7d" stroke-width="2.2"/><rect x="530" y="360" width="5" height="4" fill="#7b7c7d"/></svg>
<svg style="left:48px;top:345px" width="120" height="90" viewBox="0 0 600 450"><rect x="30" y="48" width="525" height="360" fill="#98999a"/><rect x="62" y="70" width="128" height="10" fill="#57585a"/><rect x="62" y="83" width="100" height="5" fill="#7b7c7d"/><path d="M218,72 H330" stroke="#57585a" stroke-width="4" fill="none"/><path d="M218,82 H360 M218,91 H360 M218,100 H360 M218,109 H360 M218,118 H360 M218,127 H360 M218,136 H360 M218,145 H360 M218,172 H360 M218,181 H360 M218,190 H360 M218,199 H360 M218,217 H360 M218,244 H360 M218,253 H360 M218,262 H360 M218,271 H360 M218,280 H360 M218,289 H360 M218,298 H360 M218,307 H360 M218,316 H360 M218,325 H360 M218,334 H360 M218,343 H360 M218,352 H360 M218,361 H360 M218,370 H303" stroke="#7b7c7d" stroke-width="3.4" fill="none"/><path d="M218,163 H330 M218,190 H330 M218,230 H330" stroke="#57585a" stroke-width="4" fill="none"/><rect x="218" y="224" width="146" height="3" fill="#3a3b3c"/><rect x="376" y="68" width="150" height="306" fill="none" stroke="#3a3b3c" stroke-width="3.5"/><rect x="376" y="68" width="150" height="10" fill="#3a3b3c"/><path d="M384,90 H518 M384,99 H518 M384,108 H518 M384,126 H518 M384,135 H518 M384,144 H518 M384,153 H518 M384,162 H518 M384,180 H518 M384,189 H518 M384,198 H518 M384,207 H518 M384,216 H518 M384,225 H518 M384,234 H518 M384,252 H518 M384,261 H518 M384,270 H518 M384,279 H518 M384,297 H518 M384,306 H518 M384,315 H518 M384,324 H518 M384,333 H518 M384,342 H518 M384,351 H518 M384,360 H464" stroke="#7b7c7d" stroke-width="3.4" fill="none"/><path d="M536,72 V110 M536,210 V240" stroke="#7b7c7d" stroke-width="2.2"/></svg>
<span class="t" style="left:100.60px;top:219.00px;font-size:8.4px;line-height:8.4px;color:#f4f4f4;transform:scaleX(1.1594);-webkit-text-stroke:0.25px #f4f4f4;">46</span><span class="t" style="left:100.60px;top:328.00px;font-size:8.4px;line-height:8.4px;color:#f4f4f4;transform:scaleX(1.1594);-webkit-text-stroke:0.25px #f4f4f4;">47</span>
<div class="abs" id="pdfbar"></div>
<div class="abs" style="left:19.5px;top:93px;width:12px;height:2px;background:linear-gradient(#f4f4f4 75%,#8b8d8f 75%)"></div><div class="abs" style="left:19.5px;top:97px;width:12px;height:2px;background:linear-gradient(#f4f4f4 75%,#8b8d8f 75%)"></div><div class="abs" style="left:19.5px;top:101px;width:12px;height:2px;background:linear-gradient(#f4f4f4 75%,#8b8d8f 75%)"></div>
<span class="t" style="left:51.00px;top:94.00px;font-size:10.4px;line-height:10.4px;color:#f1f1f1;font-weight:700;transform:scaleX(0.9465);">ManualUsuario_PeopleS-E5-web.pdf</span>
<div class="abs dbox" style="left:274.5px;top:91px;width:17.5px;height:14.5px"></div><span class="t" style="left:277.50px;top:94.00px;font-size:8.6px;line-height:8.6px;color:#f1f1f1;transform:scaleX(1.2031);">46</span><span class="t" style="left:295.50px;top:94.00px;font-size:8.6px;line-height:8.6px;color:#f1f1f1;transform:scaleX(1.2557);">/ 56</span>
<div class="abs" style="left:329.5px;top:93px;width:1px;height:10.5px;background:#5d6163"></div>
<div class="abs" style="left:342px;top:97.6px;width:9.5px;height:1.2px;background:#f1f1f1"></div>
<div class="abs dbox" style="left:362.7px;top:91px;width:34px;height:14.5px"></div><span class="t" style="left:370.50px;top:94.00px;font-size:8.6px;line-height:8.6px;color:#f1f1f1;transform:scaleX(1.1046);">73%</span>
<svg style="left:408.5px;top:93.6px" width="9.4" height="9.4" viewBox="0 0 9.4 9.4"><path d="M4.7,0 V9.4 M0,4.7 H9.4" stroke="#f1f1f1" stroke-width="1.2"/></svg>
<div class="abs" style="left:430px;top:93px;width:1px;height:10.5px;background:#5d6163"></div>
<svg style="left:446px;top:92.5px" width="14.5" height="12" viewBox="0 0 14.5 12"><rect x="0.7" y="0.7" width="13.1" height="10.6" rx="1.2" stroke="#f1f1f1" stroke-width="1.3" fill="none"/><path d="M7.25,2.2 L9,4.4 H5.5 Z M7.25,9.8 L9,7.6 H5.5 Z" fill="#f1f1f1"/></svg>
<svg style="left:472px;top:91px" width="15" height="15" viewBox="0 0 24 24"><path d="M7.1,7.6 L1.8,12.9 L7.1,18.2 L12.4,12.9 Z" stroke="#f1f1f1" stroke-width="2" fill="none" stroke-linejoin="round"/><path d="M11,3.2 A9,9 0 1 1 11.5,21.8" stroke="#f1f1f1" stroke-width="2" fill="none"/><path d="M12.2,0 V6.6 L8.2,3.2 Z" fill="#f1f1f1"/></svg>
<svg style="left:678px;top:92px" width="9.4" height="11.6" viewBox="0 0 9.4 11.6"><path d="M2.9,0 H6.5 V3.8 H9.2 L4.7,8.3 L0.2,3.8 H2.9 Z" fill="#f1f1f1"/><rect x="0.2" y="10" width="9" height="1.5" fill="#f1f1f1"/></svg>
<svg style="left:706px;top:92px" width="13" height="12" viewBox="0 0 13 12"><rect x="2.6" y="0" width="7.8" height="2.4" fill="#f1f1f1"/><path d="M1.8,3.4 H11.2 A1.8,1.8 0 0 1 13,5.2 V9.3 H10.4 V7 H2.6 V9.3 H0 V5.2 A1.8,1.8 0 0 1 1.8,3.4 Z" fill="#f1f1f1"/><rect x="3.7" y="8" width="5.6" height="4" fill="#f1f1f1"/><circle cx="10.9" cy="5.3" r="0.7" fill="#323639"/></svg>
<div class="abs" style="left:741.7px;top:93.4px;width:2px;height:2px;border-radius:1px;background:#f1f1f1"></div><div class="abs" style="left:741.7px;top:97.2px;width:2px;height:2px;border-radius:1px;background:#f1f1f1"></div><div class="abs" style="left:741.7px;top:101px;width:2px;height:2px;border-radius:1px;background:#f1f1f1"></div>
<div class="abs" id="taskbar"><svg style="left:0;top:0" width="768" height="31" viewBox="0 0 768 31" preserveAspectRatio="none"><defs><linearGradient id="tg1" x1="0" x2="1" y1="0" y2="0"><stop offset="0" stop-color="#c9942f"/><stop offset="0.6" stop-color="#c48d2b"/><stop offset="1" stop-color="#bd8326"/></linearGradient><linearGradient id="tg2" x1="0" x2="1" y1="0" y2="0"><stop offset="0" stop-color="#c5a76d"/><stop offset="0.56" stop-color="#c3a467"/><stop offset="0.72" stop-color="#c8a24c"/><stop offset="1" stop-color="#cfa138"/></linearGradient></defs><rect width="768" height="31" fill="#c9942f"/><rect width="378" height="31" fill="url(#tg1)"/><path d="M26,31 L42,0 H52 L34,31 Z" fill="#d8ab4e" opacity=".3"/><path d="M378,0 H425 L431,31 H372 Z" fill="#a3843e"/><path d="M425,0 H768 V31 H431 Z" fill="url(#tg2)"/><path d="M672,0 L768,28 V0 Z" fill="#d2a336" opacity=".45"/></svg></div>
<svg style="left:8.5px;top:425px" width="20.5" height="19" viewBox="0 0 21 18"><path d="M0,2.6 L8.6,1.5 V8.4 H0 Z M9.6,1.35 L21,0 V8.4 H9.6 Z M0,9.4 H8.6 V16.4 L0,15.3 Z M9.6,9.4 H21 V18 L9.6,16.55 Z" fill="#fff"/></svg>
<svg style="left:49.5px;top:423.7px" width="22.6" height="22.4" viewBox="0 0 24 24"><rect width="24" height="24" fill="#0f8a10"/><path d="M3.6,9.2 L19.6,7 L20,20.6 L4.4,19 Z" fill="#fff"/><path d="M7.6,8.6 Q7.4,3.4 10.6,3.2 Q13.4,3.2 13.6,7.8" stroke="#fff" stroke-width="1.3" fill="none"/><path d="M7.4,11.6 L11,11.2 V14 H7.4 Z M12,11.1 L16.6,10.5 V14 H12 Z M7.4,15 H11 V17.8 L7.4,17.4 Z M12,15 H16.6 V18.6 L12,18 Z" fill="#0f8a10"/></svg>
<div class="abs" style="left:85px;top:421px;width:44px;height:30px;background:#d8b980;border:1px solid #ead6ad"></div>
<svg style="left:95.3px;top:423.4px" width="23.4" height="23.4" viewBox="1 1 46 46"><path d="M24,2 A22,22 0 0 1 43.05,13 H24 A11,11 0 0 0 14.47,18.5 L4.95,13 A22,22 0 0 1 24,2 Z" fill="#db4437"/><path d="M4.95,13 L14.47,29.5 A11,11 0 0 0 24,35 L19,45.4 A22,22 0 0 1 4.95,13 Z" fill="#0f9d58"/><path d="M43.05,13 A22,22 0 0 1 19,45.4 L33.53,29.5 A11,11 0 0 0 33,17 L24,13 Z" fill="#ffcd40"/><circle cx="24" cy="24" r="10" fill="#fff"/><circle cx="24" cy="24" r="8" fill="#4285f4"/></svg>
<svg style="left:141.5px;top:422.5px" width="24" height="24" viewBox="0 0 24 24"><rect x="1" y="1" width="20.5" height="20" rx="1.2" fill="#f4f8fd" stroke="#2f66b5" stroke-width="1.1"/><path d="M1.5,12 H21 V20.5 H1.5 Z" fill="#cfe0f5"/><path d="M4,14 H19 M4,16.2 H19 M4,18.4 H19" stroke="#7aa3dc" stroke-width="0.9"/><text x="9.6" y="13.6" font-family="Liberation Sans, sans-serif" font-size="14.5" font-weight="700" fill="#1d4e9f" stroke="#1d4e9f" stroke-width="0.5" text-anchor="middle">W</text><path d="M14.5,14.5 L22.8,12.6 L23.6,19.6 L15.6,21.6 Z" fill="#fff" stroke="#6f93c7" stroke-width="0.6"/><path d="M14.5,14.5 L19.6,17.4 L22.8,12.6" fill="none" stroke="#6f93c7" stroke-width="0.5"/></svg>
<div class="abs" style="left:178.5px;top:421px;width:43.5px;height:30px;background:#cfa14e;border:1px solid #dab871"></div>
<svg style="left:189px;top:423.5px" width="23" height="22.8" viewBox="0 0 24 24"><rect width="24" height="24" fill="#5133ab"/><g transform="translate(12 12)"><g fill="#fff"><rect x="-2.2" y="-9.6" width="4.4" height="19.2" rx=".5"/><rect x="-2.2" y="-9.6" width="4.4" height="19.2" rx=".5" transform="rotate(45)"/><rect x="-2.2" y="-9.6" width="4.4" height="19.2" rx=".5" transform="rotate(90)"/><rect x="-2.2" y="-9.6" width="4.4" height="19.2" rx=".5" transform="rotate(135)"/><circle r="7.2"/></g><circle r="3.8" fill="#5133ab"/></g></svg>
<svg style="left:615.5px;top:433.5px" width="7" height="4" viewBox="0 0 7 4"><path d="M0,4 L3.5,0 L7,4 Z" fill="#fff"/></svg><svg style="left:630.5px;top:430px" width="13" height="11.5" viewBox="0 0 13 11.5"><path d="M1,0 V11.5" stroke="#fff" stroke-width="1.1"/><path d="M1.6,1.2 Q4,0.4 6.5,1.8 Q9,3.2 12,2.4 L10,4.6 L11.6,6.6 Q8.6,7.4 6.4,6.2 Q4,5 1.6,5.8 Z" fill="rgba(255,255,255,.55)" stroke="#fff" stroke-width="0.9"/></svg><svg style="left:653px;top:429px" width="8.2" height="11.6" viewBox="0 0 8.5 12"><rect x="0.6" y="1.6" width="7.3" height="9.8" rx="0.8" stroke="#fff" stroke-width="1.1" fill="none"/><rect x="2.6" y="0" width="3.3" height="1.4" fill="#fff"/><rect x="2.1" y="5.2" width="4.3" height="4.8" fill="#fff"/></svg><svg style="left:666.5px;top:431px" width="12.5" height="9.5" viewBox="0 0 12.5 9.5"><path d="M0,9.5 V7.8 H1.6 V9.5 Z M2.7,9.5 V6 H4.3 V9.5 Z M5.4,9.5 V4 H7 V9.5 Z M8.1,9.5 V2 H9.7 V9.5 Z M10.8,9.5 V0 H12.4 V9.5 Z" fill="#fff"/></svg><svg style="left:684.5px;top:430px" width="13" height="11" viewBox="0 0 13 11"><path d="M0,3.6 H2.4 L5.6,0.6 V10.4 L2.4,7.4 H0 Z" fill="#fff"/><path d="M7.2,3.2 Q8.6,5.5 7.2,7.8 M8.9,1.8 Q11,5.5 8.9,9.2 M10.7,0.6 Q13.4,5.5 10.7,10.4" stroke="#fff" stroke-width="0.8" fill="none"/></svg>
<span class="t" style="left:725.00px;top:425.00px;font-size:8.4px;line-height:8.4px;color:#fff;transform:scaleX(0.9509);">9:27</span><span class="t" style="left:710.50px;top:438.00px;font-size:8.4px;line-height:8.4px;color:#fff;transform:scaleX(1.0187);">21/08/2021</span>
</body></html>
